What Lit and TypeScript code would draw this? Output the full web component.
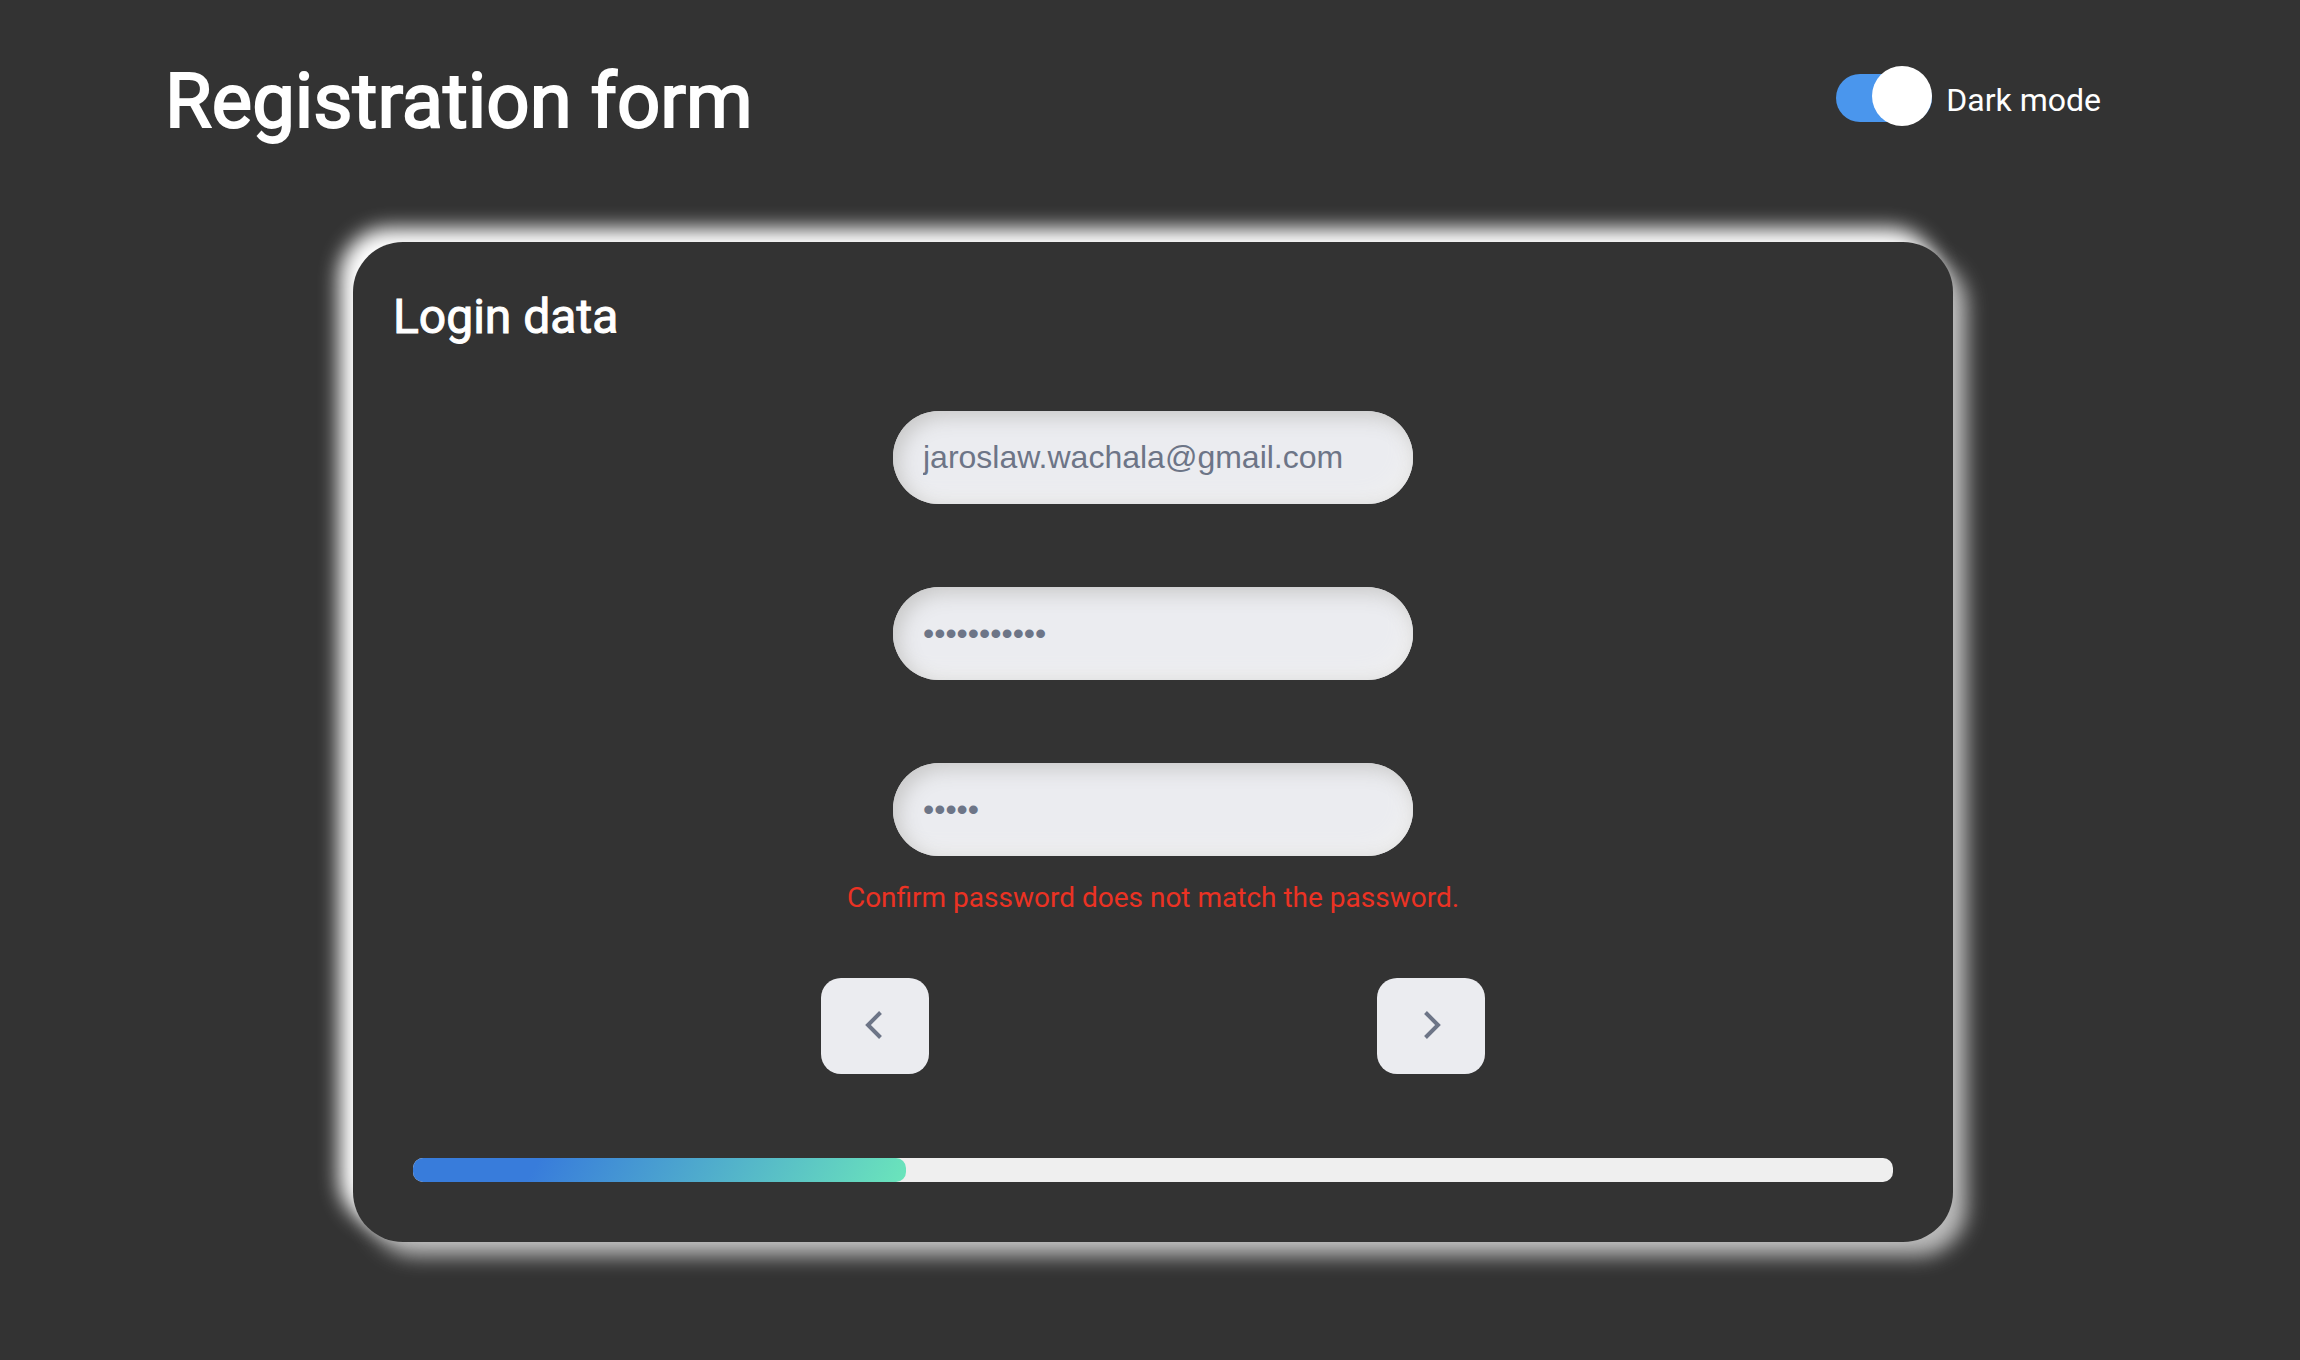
import { LitElement, html, css } from "lit";
import { customElement, property, state } from "lit/decorators.js";

@customElement("theme-switch")
export class ThemeSwitch extends LitElement {
  @property({ type: Boolean }) checked = false;

  static styles = css`
    :host {
      display: block;
    }
    .switch {
      display: flex;
      align-items: center;
      gap: 14px;
      cursor: pointer;
    }
    .input {
      appearance: none;
      display: flex;
      align-items: center;
      width: 96px;
      height: 48px;
      margin: 0;
      border-radius: 24px;
      background: #c4c4c4;
      cursor: pointer;
    }
    .input::before {
      content: "";
      flex: none;
      width: 60px;
      height: 60px;
      margin-bottom: 4px;
      border-radius: 50%;
      background: #fff;
    }
    .input:checked {
      justify-content: flex-end;
      background: #4a96ed;
    }
    .track {
      display: flex;
      padding-bottom: 4px;
    }
    .label {
      font-size: 32px;
      line-height: 40px;
    }
  `;

  private toggle(event: Event) {
    this.checked = (event.target as HTMLInputElement).checked;
    this.dispatchEvent(new CustomEvent("theme-change", { detail: this.checked }));
  }

  render() {
    return html`
      <label class="switch">
        <span class="track">
          <input class="input" type="checkbox" role="switch" .checked=${this.checked} @change=${this.toggle} />
        </span>
        <span class="label">Dark mode</span>
      </label>
    `;
  }
}

@customElement("progress-bar")
export class ProgressBar extends LitElement {
  @property({ type: Number }) step = 1;
  @property({ type: Number }) steps = 3;

  static styles = css`
    :host {
      display: block;
    }
    .bar {
      height: 24px;
      border-radius: 10px;
      background: #efefef;
    }
    .fill {
      height: 100%;
      border-radius: 10px;
      background: linear-gradient(120deg, #387cdb 25%, #6be5bb);
    }
  `;

  render() {
    return html`
      <div
        class="bar"
        role="progressbar"
        aria-label="Form progress"
        aria-valuemin="0"
        aria-valuemax=${this.steps}
        aria-valuenow=${this.step}
      >
        <div class="fill" style="width: ${(this.step / this.steps) * 100}%"></div>
      </div>
    `;
  }
}

@customElement("app-root")
export class AppRoot extends LitElement {
  @state() private dark = true;
  @state() private email = "jaroslaw.wachala@gmail.com";
  @state() private password = "password123";
  @state() private confirmation = "passw";

  static styles = css`
    :host {
      display: block;
      font-family: Roboto, "Liberation Sans", sans-serif;
    }
    .page {
      --surface: #ebecf0;
      --ink: #333;
      display: flex;
      flex-direction: column;
      box-sizing: border-box;
      min-height: 100vh;
      padding: 51px 32px 96px 38px;
      background: var(--surface);
      color: var(--ink);
    }
    .page.dark {
      --surface: #333;
      --ink: #fff;
    }
    .header {
      display: flex;
      align-items: flex-start;
      justify-content: space-between;
      margin-bottom: 91px;
      padding: 0 167px 0 127px;
    }
    .title {
      margin: 0;
      font-size: 76px;
      line-height: 100px;
      font-weight: 400;
      -webkit-text-stroke: 2px currentColor;
    }
    .theme {
      padding-top: 23px;
    }
    .card {
      display: flex;
      flex-direction: column;
      box-sizing: border-box;
      width: 100%;
      max-width: 1600px;
      margin: 0 auto;
      padding: 40px 40px 60px;
      border-radius: 50px;
      background: var(--surface);
      box-shadow: -14px -14px 20px #fff, 14px 14px 20px #bbb;
    }
    .legend {
      margin: 0 0 59px;
      font-size: 48px;
      line-height: 70px;
      font-weight: 400;
      -webkit-text-stroke: 1px currentColor;
    }
    .fields {
      display: flex;
      flex-direction: column;
      align-items: center;
      gap: 83px;
    }
    .field {
      box-sizing: border-box;
      width: 520px;
      max-width: 100%;
      height: 93px;
      padding: 0 30px;
      border: 0;
      border-radius: 46px;
      outline: 0;
      background: #ebecf0;
      box-shadow: inset 6px 6px 20px #c8c8c8, inset -8px -8px 20px #f0f0f0;
      color: #6d7587;
      font-family: "Liberation Sans", Arial, sans-serif;
      font-size: 32px;
    }
    .error {
      margin: 22px 0 0;
      color: #eb3223;
      font-size: 28px;
      line-height: 40px;
      text-align: center;
    }
    .actions {
      display: flex;
      justify-content: space-between;
      width: 664px;
      max-width: 100%;
      margin: 60px auto 84px;
    }
    .step {
      display: flex;
      align-items: center;
      justify-content: center;
      width: 108px;
      height: 96px;
      padding: 0;
      border: 0;
      border-radius: 20px;
      background: #ebecf0;
      color: #6d7587;
      cursor: pointer;
    }
    .icon {
      width: 32px;
      height: 32px;
      fill: none;
      stroke: currentColor;
      stroke-width: 4;
    }
    .progress {
      padding: 0 20px;
    }
  `;

  private get mismatch() {
    return this.confirmation !== this.password;
  }

  render() {
    return html`
      <div class="page ${this.dark ? "dark" : ""}">
        <header class="header">
          <h1 class="title">Registration form</h1>
          <theme-switch
            class="theme"
            .checked=${this.dark}
            @theme-change=${(e: CustomEvent<boolean>) => (this.dark = e.detail)}
          ></theme-switch>
        </header>
        <form class="card" @submit=${(e: Event) => e.preventDefault()}>
          <h2 class="legend">Login data</h2>
          <div class="fields">
            <input
              class="field"
              type="email"
              aria-label="E-mail"
              .value=${this.email}
              @input=${(e: Event) => (this.email = (e.target as HTMLInputElement).value)}
            />
            <input
              class="field"
              type="password"
              aria-label="Password"
              .value=${this.password}
              @input=${(e: Event) => (this.password = (e.target as HTMLInputElement).value)}
            />
            <input
              class="field"
              type="password"
              aria-label="Confirm password"
              .value=${this.confirmation}
              @input=${(e: Event) => (this.confirmation = (e.target as HTMLInputElement).value)}
            />
          </div>
          ${this.mismatch
            ? html`<p class="error" role="alert">Confirm password does not match the password.</p>`
            : null}
          <div class="actions">
            <button class="step" type="button" aria-label="Previous step">
              <svg class="icon" viewBox="0 0 32 32" aria-hidden="true">
                <path d="M21.5 2.5 9 15l12.5 12.5" />
              </svg>
            </button>
            <button class="step" type="submit" aria-label="Next step">
              <svg class="icon" viewBox="0 0 32 32" aria-hidden="true">
                <path d="M10.5 2.5 23 15 10.5 27.5" />
              </svg>
            </button>
          </div>
          <progress-bar class="progress" .step=${1} .steps=${3}></progress-bar>
        </form>
      </div>
    `;
  }
}
